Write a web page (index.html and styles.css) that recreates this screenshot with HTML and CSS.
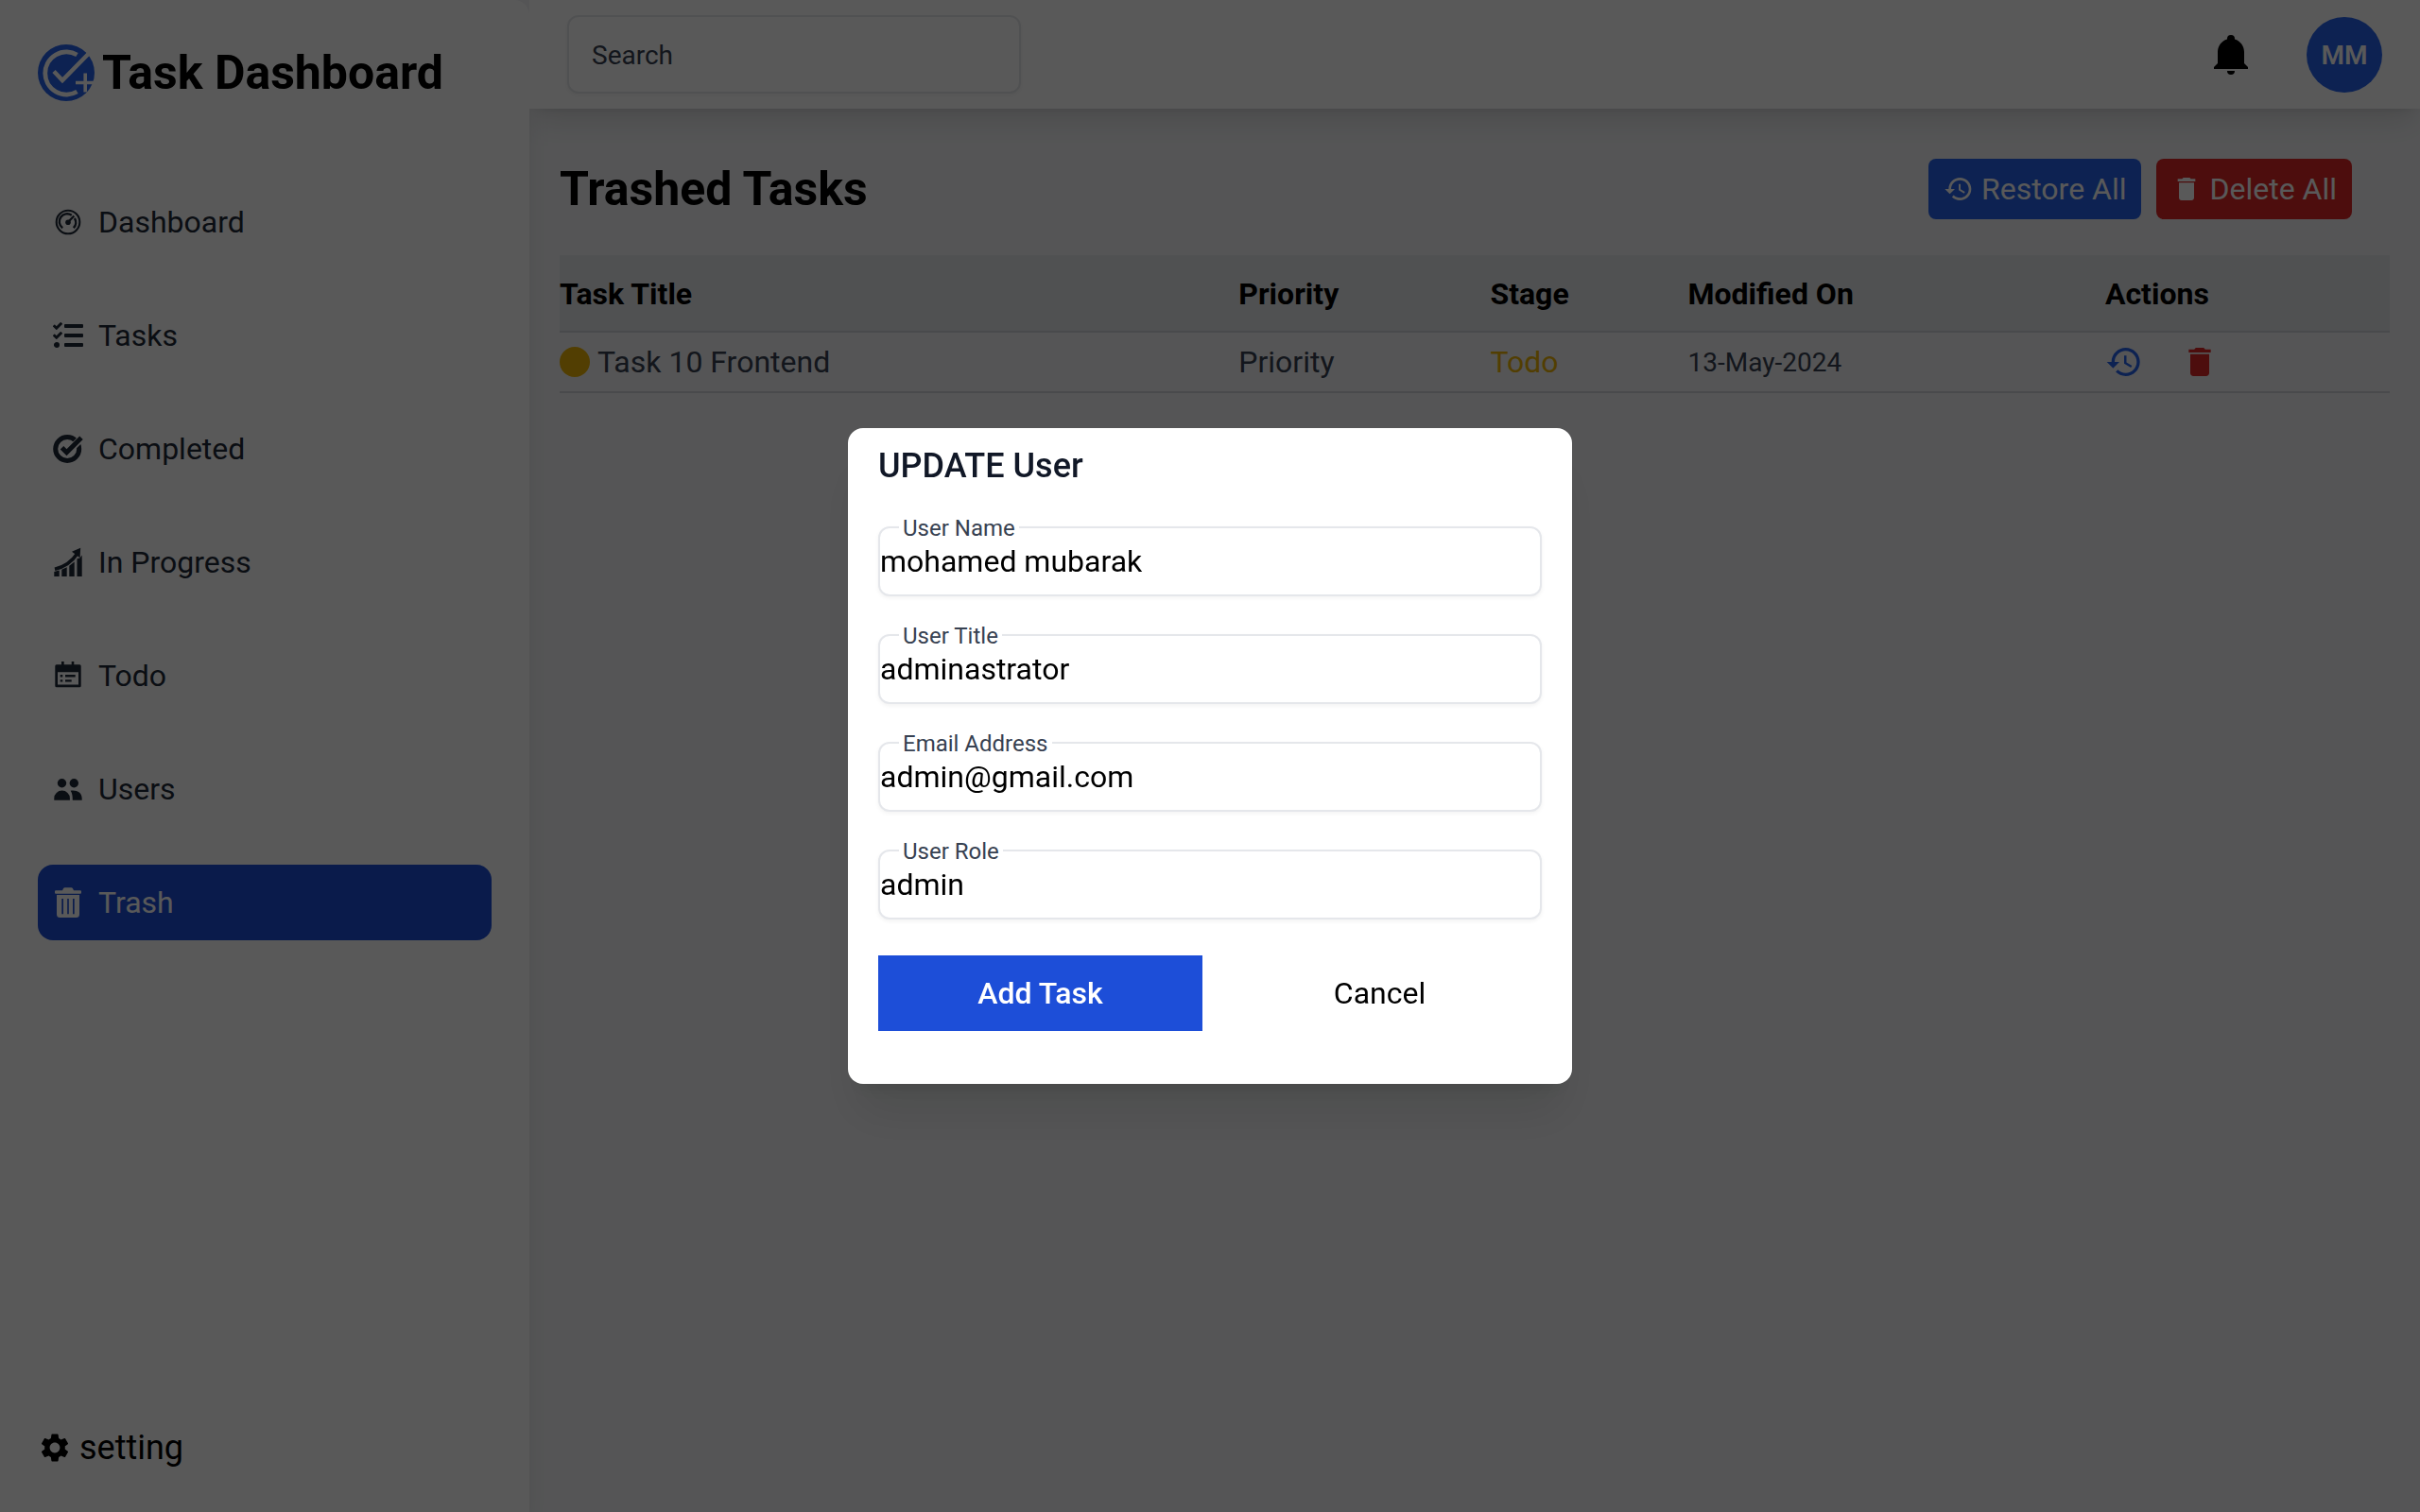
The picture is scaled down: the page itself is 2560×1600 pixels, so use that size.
FILE: index.html
```html
<!DOCTYPE html>
<html lang="en">
<head>
<meta charset="utf-8">
<meta name="viewport" content="width=device-width, initial-scale=1">
<title>Task Dashboard</title>
<link rel="stylesheet" href="styles.css">
</head>
<body>
<svg class="sprite" aria-hidden="true">
  <symbol id="i-history" viewBox="0 0 24 24"><path d="M13 3c-4.97 0-9 4.03-9 9H1l3.89 3.89.07.14L9 12H6c0-3.87 3.13-7 7-7s7 3.13 7 7-3.13 7-7 7c-1.93 0-3.68-.79-4.94-2.06l-1.42 1.42C8.27 19.99 10.51 21 13 21c4.97 0 9-4.03 9-9s-4.03-9-9-9zm-1 5v5l4.28 2.54.72-1.21-3.5-2.08V8H12z"/></symbol>
  <symbol id="i-delete" viewBox="0 0 24 24"><path d="M6 19c0 1.1.9 2 2 2h8c1.1 0 2-.9 2-2V7H6v12zM19 4h-3.5l-1-1h-5l-1 1H5v2h14V4z"/></symbol>
</svg>

<div class="app">
  <aside class="sidebar">
    <div class="brand">
      <svg class="brand-logo" viewBox="0 0 60 60" aria-hidden="true">
        <circle cx="30" cy="30" r="30" fill="#2563eb"/>
        <g fill="none" stroke="#fff">
          <path d="M41.500 11A22.500 22.500 0 1 0 41.500 50" stroke-width="4.800"/>
          <path d="M17 28.500L26 38L53.500 10" stroke-width="4.500"/>
          <path d="M40 40.500H60M50.200 30.500V50.500" stroke-width="3.600"/>
        </g>
      </svg>
      <h1 class="brand-name">Task Dashboard</h1>
    </div>
    <nav class="nav">
      <a class="nav-link" href="#dashboard">
        <svg class="icon" viewBox="0 0 32 32" fill="none" stroke="currentColor" aria-hidden="true">
          <circle cx="16" cy="16" r="12.300" stroke-width="2.100"/>
          <path d="M10.200 22.200A8.200 8.200 0 0 1 19.800 8.800M22.900 12A8.200 8.200 0 0 1 21.800 22.200" stroke-width="2.400"/>
          <path d="M16 16L22.300 9.500" stroke-width="2.400"/>
          <circle cx="16" cy="16.200" r="2.800" fill="currentColor" stroke="none"/>
        </svg>
        <span>Dashboard</span>
      </a>
      <a class="nav-link" href="#tasks">
        <svg class="icon" viewBox="0 0 512 512" aria-hidden="true"><path d="M139.610 35.500a12 12 0 0 0-17 0L58.930 98.810l-22.700-22.120a12 12 0 0 0-17 0L3.530 92.410a12 12 0 0 0 0 17l47.590 47.400a12.780 12.780 0 0 0 17.610 0l15.590-15.620L156.520 69a12.090 12.090 0 0 0 .09-17zm0 159.190a12 12 0 0 0-17 0l-63.680 63.720-22.700-22.100a12 12 0 0 0-17 0L3.530 252a12 12 0 0 0 0 17L51 316.500a12.770 12.770 0 0 0 17.600 0l15.700-15.690 72.200-72.220a12 12 0 0 0 .09-16.900zM64 368c-26.490 0-48.590 21.500-48.590 48S37.530 464 64 464a48 48 0 0 0 0-96zm432 16H208a16 16 0 0 0-16 16v32a16 16 0 0 0 16 16h288a16 16 0 0 0 16-16v-32a16 16 0 0 0-16-16zm0-320H208a16 16 0 0 0-16 16v32a16 16 0 0 0 16 16h288a16 16 0 0 0 16-16V80a16 16 0 0 0-16-16zm0 160H208a16 16 0 0 0-16 16v32a16 16 0 0 0 16 16h288a16 16 0 0 0 16-16v-32a16 16 0 0 0-16-16z"/></svg>
        <span>Tasks</span>
      </a>
      <a class="nav-link" href="#completed">
        <svg class="icon" viewBox="0 0 32 32" fill="none" stroke="currentColor" aria-hidden="true">
          <circle cx="15.200" cy="16" r="12.500" stroke-width="5"/>
          <path d="M16 19L32 3" stroke="#fff" stroke-width="7.500"/>
          <path d="M9.500 14.800L14.500 19.800L30 4.300" stroke-width="5"/>
        </svg>
        <span>Completed</span>
      </a>
      <a class="nav-link" href="#in-progress">
        <svg class="icon" viewBox="0 0 32 32" aria-hidden="true">
          <path d="M1.300 26L3 25.500L6.700 24.500V31H1.300zM9.300 23.700L14.700 21.300V31H9.300zM17.300 19.700L22.700 15.500V31H17.300zM25.500 12.300L28.500 11.500L30.700 8.500V31H25.500z"/>
          <path d="M2 23.300C12 21 20 15.500 26 6.500" fill="none" stroke="currentColor" stroke-width="3.600"/>
          <path d="M20 4.800L29.200 .8L28.600 11.200z"/>
        </svg>
        <span>In Progress</span>
      </a>
      <a class="nav-link" href="#todo">
        <svg class="icon" viewBox="0 0 32 32" aria-hidden="true">
          <path fill-rule="evenodd" d="M9 1h2.700v3.300h8V1h2.600v3.300H28.200a1.500 1.500 0 0 1 1.500 1.500V26.800a1.500 1.500 0 0 1-1.500 1.500H3.800a1.500 1.500 0 0 1-1.500-1.500V5.800a1.500 1.500 0 0 1 1.500-1.500H9zM5 12.300V25.500H27V12.300z"/>
          <path d="M7.700 15H10.300V17.400H7.700zM13 15H23.700V17.400H13zM7.700 20.200H10.300V22.600H7.700zM13 20.200H19.700V22.600H13z"/>
        </svg>
        <span>Todo</span>
      </a>
      <a class="nav-link" href="#users">
        <svg class="icon" viewBox="0 0 32 32" aria-hidden="true">
          <circle cx="9.500" cy="9.700" r="4.700"/><circle cx="22.300" cy="9.700" r="4.700"/>
          <path d="M1.300 27.700V25.500a8.200 7.800 0 0 1 16.600 0V27.700zM18.600 17.800C25 16.800 30.700 19.500 30.700 26V27.700H20.800C20.800 23.500 20.500 20.500 18.600 17.800z"/>
        </svg>
        <span>Users</span>
      </a>
      <a class="nav-link nav-link-active" href="#trash" aria-current="page">
        <svg class="icon" viewBox="0 0 32 32" aria-hidden="true">
          <path d="M10 3.300L11 1.300Q11.500 .3 12.600 .3H19.400Q20.500 .3 21 1.300L22 3.300H29Q30 3.300 30 4.300V5.700Q30 6.700 29 6.700H3Q2 6.700 2 5.700V4.300Q2 3.300 3 3.300z"/>
          <path fill-rule="evenodd" d="M4 8H28V28.500Q28 32 24.500 32H7.500Q4 32 4 28.500zM9.300 12V28.300H11V12zM15.200 12V28.300H16.800V12zM21 12V28.300H22.700V12z"/>
        </svg>
        <span>Trash</span>
      </a>
    </nav>
    <button class="settings" type="button">
      <svg class="icon icon-settings" viewBox="0 0 24 24" aria-hidden="true"><path d="M19.140 12.940c.04-.3.06-.61.06-.94 0-.32-.02-.64-.07-.94l2.030-1.580a.49.49 0 0 0 .12-.61l-1.920-3.320a.488.488 0 0 0-.59-.22l-2.390.96c-.5-.38-1.030-.7-1.620-.94l-.36-2.540a.484.484 0 0 0-.48-.41h-3.840c-.24 0-.43.17-.47.41l-.36 2.540c-.59.24-1.130.57-1.620.94l-2.390-.96c-.22-.08-.47 0-.59.22L2.740 8.870c-.12.21-.08.47.12.61l2.030 1.580c-.05.3-.09.63-.09.94s.02.64.07.94l-2.030 1.580a.49.49 0 0 0-.12.61l1.920 3.320c.12.22.37.29.59.22l2.390-.96c.5.38 1.030.7 1.620.94l.36 2.540c.05.24.24.41.48.41h3.840c.24 0 .44-.17.47-.41l.36-2.540c.59-.24 1.130-.56 1.620-.94l2.390.96c.22.08.47 0 .59-.22l1.920-3.320c.12-.22.07-.47-.12-.61l-2.010-1.580zM12 15.600c-1.980 0-3.600-1.620-3.600-3.600s1.620-3.600 3.600-3.600 3.600 1.620 3.600 3.600-1.620 3.600-3.600 3.600z"/></svg>
      <span>setting</span>
    </button>
  </aside>

  <div class="content">
    <header class="topbar">
      <input class="search" type="search" placeholder="Search" aria-label="Search">
      <div class="topbar-tools">
        <button class="icon-button" type="button" aria-label="Notifications">
          <svg class="icon icon-bell" viewBox="0 0 24 24" aria-hidden="true"><path d="M21 18.500v1H3v-1l2-2v-6c0-3.100 2.030-5.830 5-6.710V3.500a2 2 0 0 1 4 0v.29c2.970.88 5 3.610 5 6.710v6l2 2m-7 2a2 2 0 0 1-4 0"/></svg>
        </button>
        <button class="avatar" type="button">MM</button>
      </div>
    </header>

    <main class="main">
      <div class="page-head">
        <h2 class="page-title">Trashed Tasks</h2>
        <div class="page-actions">
          <button class="btn btn-restore" type="button"><svg class="icon" aria-hidden="true"><use href="#i-history"/></svg><span>Restore All</span></button>
          <button class="btn btn-delete" type="button"><svg class="icon" aria-hidden="true"><use href="#i-delete"/></svg><span>Delete All</span></button>
        </div>
      </div>
      <table class="tasks">
        <colgroup><col class="col-title"><col class="col-priority"><col class="col-stage"><col class="col-date"><col></colgroup>
        <thead>
          <tr><th scope="col">Task Title</th><th scope="col">Priority</th><th scope="col">Stage</th><th scope="col">Modified On</th><th scope="col">Actions</th></tr>
        </thead>
        <tbody>
          <tr>
            <td><div class="task-title"><span class="dot"></span><span>Task 10 Frontend</span></div></td>
            <td>Priority</td>
            <td class="stage">Todo</td>
            <td class="date">13-May-2024</td>
            <td>
              <div class="row-actions">
                <button class="icon-button restore" type="button" aria-label="Restore task"><svg class="icon icon-row" aria-hidden="true"><use href="#i-history"/></svg></button>
                <button class="icon-button delete" type="button" aria-label="Delete task"><svg class="icon icon-row" aria-hidden="true"><use href="#i-delete"/></svg></button>
              </div>
            </td>
          </tr>
        </tbody>
      </table>
    </main>
  </div>
</div>

<div class="overlay">
  <form class="modal" role="dialog" aria-modal="true" aria-labelledby="modal-title">
    <h2 class="modal-title" id="modal-title">UPDATE User</h2>
    <div class="fields">
      <div class="field"><label for="user-name">User Name</label><input id="user-name" type="text" value="mohamed mubarak"></div>
      <div class="field"><label for="user-title">User Title</label><input id="user-title" type="text" value="adminastrator"></div>
      <div class="field"><label for="user-email">Email Address</label><input id="user-email" type="email" value="admin@gmail.com"></div>
      <div class="field"><label for="user-role">User Role</label><input id="user-role" type="text" value="admin"></div>
    </div>
    <div class="modal-actions">
      <button class="modal-btn modal-btn-primary" type="button">Add Task</button>
      <button class="modal-btn" type="button">Cancel</button>
    </div>
  </form>
</div>
</body>
</html>
```

FILE: styles.css
```css
*, *::before, *::after { box-sizing: border-box; }

body {
  margin: 0;
  background: #f3f4f6;
  color: #000;
  font-family: Roboto, "Liberation Sans", sans-serif;
  font-size: 32px;
  line-height: 48px;
}

h1, h2 { margin: 0; }

button {
  margin: 0;
  padding: 0;
  border: 0;
  background: none;
  color: inherit;
  font: inherit;
  cursor: pointer;
}

.sprite { display: none; }

.icon {
  flex: none;
  display: block;
  width: 32px;
  height: 32px;
  fill: currentColor;
}
.icon[fill="none"] { fill: none; }
.icon-settings { width: 36px; height: 36px; }
.icon-bell { width: 48px; height: 48px; }
.icon-row { width: 40px; height: 40px; }
.icon-button { display: flex; }

.app { display: flex; min-height: 100vh; }

/* Sidebar */
.sidebar {
  flex: none;
  display: flex;
  flex-direction: column;
  width: 560px;
  padding: 40px 40px 44px;
  border-radius: 0 16px 0 0;
  background: #fff;
  box-shadow: 0 20px 30px -6px rgba(0, 0, 0, .1), 0 8px 12px -8px rgba(0, 0, 0, .1);
}
.brand { display: flex; align-items: center; gap: 8px; height: 74px; }
.brand-logo { flex: none; width: 60px; height: 60px; }
.brand-name { font-size: 50px; font-weight: 700; line-height: 46px; white-space: nowrap; }
.nav { display: flex; flex-direction: column; gap: 40px; margin-top: 81px; }
.nav-link {
  display: flex;
  align-items: center;
  gap: 16px;
  padding: 16px;
  border-radius: 16px;
  color: #1f2937;
  text-decoration: none;
}
.nav-link-active { background: #1d4ed8; color: #fff; }
.settings {
  display: flex;
  align-items: center;
  gap: 8px;
  margin-top: auto;
  font-size: 36px;
}

/* Top bar */
.content { flex: 1; min-width: 0; }
.topbar {
  display: flex;
  align-items: center;
  justify-content: space-between;
  padding: 16px 40px;
  background: #fff;
  box-shadow: 0 20px 30px -6px rgba(0, 0, 0, .1), 0 8px 12px -8px rgba(0, 0, 0, .1);
  clip-path: inset(0 0 -60px 0);
}
.search {
  width: 480px;
  height: 83px;
  padding: 2px 24px 0;
  border: 2px solid #e5e7eb;
  border-radius: 12px;
  background: #fff;
  box-shadow: 0 2px 4px rgba(0, 0, 0, .05);
  font: inherit;
  font-size: 28px;
  appearance: none;
}
.search::placeholder { color: #374151; opacity: 1; }
.topbar-tools { display: flex; align-items: center; gap: 56px; }
.avatar {
  width: 80px;
  height: 80px;
  padding-top: 2px;
  border-radius: 50%;
  background: #2563eb;
  color: #fff;
  font-size: 28px;
  font-weight: 600;
}

/* Page */
.main { padding: 53px 32px 32px; }
.page-head {
  display: flex;
  align-items: center;
  justify-content: space-between;
  padding-right: 40px;
}
.page-title { font-size: 50px; font-weight: 700; line-height: 64px; }
.page-actions { display: flex; gap: 16px; }
.btn {
  display: flex;
  align-items: center;
  gap: 8px;
  padding: 8px 16px;
  border-radius: 8px;
  color: #fff;
}
.btn-restore { background: #2563eb; }
.btn-delete { background: #dc2626; }

.tasks {
  width: 100%;
  margin-top: 38px;
  border-collapse: collapse;
  table-layout: fixed;
  color: #374151;
}
.col-title { width: 37.1%; }
.col-priority { width: 13.75%; }
.col-stage { width: 10.8%; }
.col-date { width: 22.8%; }
.tasks th, .tasks td { text-align: left; border-bottom: 2px solid #d1d5db; }
.tasks thead { background: #e5e7eb; color: #000; }
.tasks th { padding: 17px 0 15px; font-weight: 700; }
.tasks td { padding: 7px 0; }
.task-title { display: flex; align-items: center; gap: 8px; }
.dot { width: 32px; height: 32px; border-radius: 50%; background: #eab308; }
.tasks .stage { color: #eab308; }
.tasks .date { padding: 8px 0 6px; font-size: 28px; }
.row-actions { display: flex; align-items: center; gap: 40px; }
.restore { color: #2563eb; }
.delete { color: #dc2626; }

/* Modal */
.overlay {
  position: fixed;
  inset: 0;
  display: flex;
  align-items: center;
  justify-content: center;
  background: rgba(0, 0, 0, .65);
}
.modal {
  width: 766px;
  padding: 18px 32px 56px;
  border-radius: 16px;
  background: #fff;
  box-shadow: 0 40px 50px -10px rgba(0, 0, 0, .1), 0 16px 20px -12px rgba(0, 0, 0, .1);
}
.modal-title { color: #111827; font-size: 36px; font-weight: 500; line-height: 44px; }
.fields { display: grid; gap: 40px; margin-top: 42px; }
.field { position: relative; }
.field label {
  position: absolute;
  top: -12px;
  left: 22px;
  padding: 0 4px;
  background: #fff;
  color: #374151;
  font-size: 24px;
  line-height: 28px;
}
.field input {
  display: block;
  width: 100%;
  height: 74px;
  padding: 0;
  border: 2px solid #e5e7eb;
  border-radius: 12px;
  background: #fff;
  box-shadow: 0 2px 4px rgba(0, 0, 0, .05);
  color: #000;
  font: inherit;
}
.modal-actions { display: grid; grid-template-columns: 1fr 1fr; gap: 16px; margin-top: 38px; }
.modal-btn { height: 80px; }
.modal-btn-primary { background: #1d4ed8; color: #fff; font-weight: 500; }
```
